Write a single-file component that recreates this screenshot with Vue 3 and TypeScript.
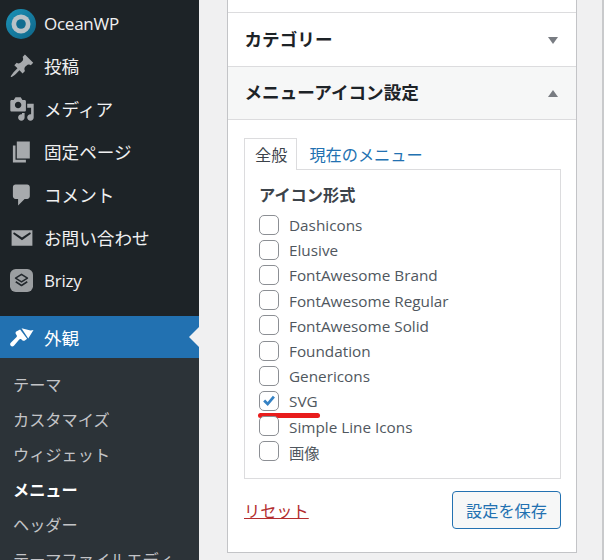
<script setup lang="ts">
interface MenuItem { label: string; d: string }
const menu: MenuItem[] = [
  { label: '投稿', d: 'M10.44 3.02l1.82-1.82 6.36 6.35-1.83 1.82c-1.05-.68-2.48-.57-3.41.36l-.75.75c-.92.93-1.04 2.35-.35 3.41l-1.83 1.82-2.41-2.41-2.8 2.79c-.42.42-3.38 2.71-3.8 2.29s1.86-3.39 2.28-3.81l2.79-2.79L4.1 9.36l1.83-1.82c1.05.69 2.48.57 3.4-.36l.75-.75c.93-.92 1.05-2.35.36-3.41z' },
  { label: 'メディア', d: 'M13 11V4c0-.55-.45-1-1-1h-1.67L9 1H5L3.67 3H2c-.55 0-1 .45-1 1v7c0 .55.45 1 1 1h10c.55 0 1-.45 1-1zM7 4.5c1.38 0 2.5 1.12 2.5 2.5S8.38 9.5 7 9.5 4.5 8.38 4.5 7 5.62 4.5 7 4.5zM14 6h5v10.5c0 1.38-1.12 2.5-2.5 2.5S14 17.88 14 16.5s1.12-2.5 2.5-2.5c.17 0 .34.02.5.05V9h-3V6zm-4 8.05V13h2v3.5c0 1.38-1.12 2.5-2.5 2.5S7 17.88 7 16.5 8.12 14 9.5 14c.17 0 .34.02.5.05z' },
  { label: '固定ページ', d: 'M6 15V2h10v13H6zm-1 1h8v2H3V5h2v11z' },
  { label: 'コメント', d: 'M5 2h9c1.1 0 2 .9 2 2v7c0 1.1-.9 2-2 2h-2l-5 5v-5H5c-1.1 0-2-.9-2-2V4c0-1.1.9-2 2-2z' },
  { label: 'お問い合わせ', d: 'M2 4h16v12H2zM3.4 6.1c-.3.4-.1.8.2 1l6.4 4.6 6.4-4.6c.3-.2.5-.6.2-1-.3-.4-.8-.4-1.1-.2L10 9.6 4.5 5.900c-.3-.2-.8-.2-1.100.2z' },
]
const subs = ['テーマ', 'カスタマイズ', 'ウィジェット', 'メニュー', 'ヘッダー', 'テーマファイルエディター']
const options = ['Dashicons', 'Elusive', 'FontAwesome Brand', 'FontAwesome Regular', 'FontAwesome Solid', 'Foundation', 'Genericons', 'SVG', 'Simple Line Icons', '画像']
</script>

<template>
  <div class="page">
    <aside class="side">
      <div class="row first">
        <span class="ico">
          <svg class="logo" width="30" height="30" viewBox="0 0 30 30">
            <defs>
              <linearGradient id="oc" x1="0" y1="0" x2="1" y2="1">
                <stop offset="0" stop-color="#1c93b8" />
                <stop offset="1" stop-color="#0f6588" />
              </linearGradient>
            </defs>
            <circle cx="15" cy="15" r="15" fill="url(#oc)" />
            <circle cx="15" cy="15" r="9.5" fill="#b9c2c7" />
            <circle cx="15" cy="15" r="4.8" fill="#116d90" />
          </svg>
        </span>
        <span class="latin">OceanWP</span>
      </div>
      <div v-for="m in menu" :key="m.label" class="row">
        <span class="ico">
          <svg width="26" height="26" viewBox="0 0 20 20"><path :d="m.d" fill="#a7aaad" fill-rule="evenodd" /></svg>
        </span>
        <span>{{ m.label }}</span>
      </div>
      <div class="row">
        <span class="ico">
          <svg width="23" height="23" viewBox="0 0 24 24">
            <rect width="24" height="24" rx="6" fill="#9b9ea1" />
            <path d="M12 5.5l6.2 4-6.2 4-6.2-4z" fill="none" stroke="#23282d" stroke-width="1.6" stroke-linejoin="round" />
            <path d="M6 13.3l6 3.9 6-3.900" fill="none" stroke="#23282d" stroke-width="1.6" stroke-linejoin="round" />
          </svg>
        </span>
        <span class="latin">Brizy</span>
      </div>
      <div class="row current">
        <span class="ico">
          <svg width="24" height="24" viewBox="0 0 25 25">
            <path d="M12 3.500l9.500 2.200 3-.5-5.500 8.800z" fill="#fff" />
            <path d="M10.500 4.800l7.300 9.600-2.300 1.700c-.9.600-2 .5-2.700-.2l-.8-.7c-.8-.7-1.900-.7-2.600.1l-5.300 6.200c-.9 1-2.400 1.100-3.300.2-.9-.9-.9-2.300 0-3.200l5.800-5.700c.7-.7.8-1.700.2-2.500l-.7-1c-.5-.8-.4-1.900.4-2.500z" fill="#fff" />
          </svg>
        </span>
        <span>外観</span>
        <i class="notch"></i>
      </div>
      <ul class="sub">
        <li v-for="s in subs" :key="s" :class="{ on: s === 'メニュー' }">{{ s }}</li>
      </ul>
    </aside>

    <main class="main">
      <section class="panel">
        <div class="blank"></div>
        <header class="head tall">
          <h3>カテゴリー</h3>
          <i class="tri down"></i>
        </header>
        <header class="head open">
          <h3>メニューアイコン設定</h3>
          <i class="tri up"></i>
        </header>
        <div class="body">
          <div class="tabs">
            <span class="tab active">全般</span>
            <span class="tab">現在のメニュー</span>
          </div>
          <div class="box">
            <h4>アイコン形式</h4>
            <label v-for="o in options" :key="o" class="opt">
              <span class="check">
                <svg v-if="o === 'SVG'" width="20" height="20" viewBox="0 0 20 20"><path d="M3.500 10.500l2.200-2.300 2.800 2.900 5.800-7 2.300 2-8 9.400z" fill="#3582c4" /></svg>
              </span>
              <span class="txt">{{ o }}</span>
              <i v-if="o === 'SVG'" class="mark"></i>
            </label>
          </div>
          <div class="actions">
            <a class="reset">リセット</a>
            <button class="save" type="button">設定を保存</button>
          </div>
        </div>
      </section>
    </main>
    <div class="edge"></div>
  </div>
</template>

<style>
html, body { margin: 0; background: #fff; }
</style>

<style scoped>
.page {
  display: flex;
  width: 612px;
  height: 560px;
  overflow: hidden;
  background: #fff;
  font-family: "Open Sans", "Noto Sans CJK JP", sans-serif;
}
.side {
  width: 199px;
  flex: none;
  height: 560px;
  padding-top: 1px;
  box-sizing: border-box;
  background: #1d2327;
  overflow: hidden;
}
.row {
  position: relative;
  display: flex;
  align-items: center;
  height: 43px;
  box-sizing: border-box;
  color: #f0f0f1;
  font-size: 17.6px;
}
.row.first { padding-top: 2px; }
.latin { font-size: 17px; letter-spacing: -0.25px; }
.ico {
  width: 44px;
  flex: none;
  display: flex;
  justify-content: center;
  padding-right: 1px;
  box-sizing: border-box;
}
.logo { margin-left: -1px; }
.row.current {
  margin-top: 14px;
  height: 42px;
  background: #2271b1;
  color: #fff;
}
.notch {
  position: absolute;
  right: 0;
  top: 11px;
  border: 10px solid transparent;
  border-right-color: #f0f0f1;
  border-left-width: 0;
}
.sub {
  list-style: none;
  margin: 0;
  padding: 10px 14px 0 14px;
  background: #2c3338;
  height: 202px;
}
.sub li {
  min-height: 35px;
  line-height: 35px;
  margin-left: -1px;
  font-size: 16.2px;
  color: #c3c4c7;
}
.sub li.on { color: #fff; font-weight: 700; }
.main {
  width: 403px;
  flex: none;
  padding-left: 28px;
  box-sizing: border-box;
  background: #f0f0f1;
}
.edge { width: 2px; flex: none; background: #c9cacc; }
.panel {
  width: 350px;
  height: 553px;
  box-sizing: border-box;
  background: #fff;
  border: 1px solid #c3c4c7;
  border-top: none;
}
.blank { height: 13px; box-sizing: border-box; border-bottom: 1px solid #dcdcde; }
.head {
  display: flex;
  align-items: center;
  justify-content: space-between;
  height: 53px;
  box-sizing: border-box;
  padding: 0 18px 2px 16.5px;
  border-bottom: 1px solid #dcdcde;
}
.head.tall { height: 54px; }
.head.open { background: #f6f7f7; }
.head.open h3 { margin-top: -2px; }
.head h3 {
  margin: 0;
  font-size: 17.6px;
  font-weight: 700;
  color: #1d2327;
}
.tri {
  width: 0;
  height: 0;
  margin-top: 3px;
  border-left: 5px solid transparent;
  border-right: 5px solid transparent;
}
.tri.down { border-top: 7px solid #787c82; }
.tri.up { border-bottom: 7px solid #787c82; }
.body { padding: 18px 16px 0; }
.tabs {
  display: flex;
  height: 32px;
  position: relative;
  z-index: 1;
}
.tab {
  height: 31px;
  line-height: 32px;
  padding: 0 7px 0 10px;
  font-size: 16.2px;
  color: #2271b1;
  border: 1px solid transparent;
  border-bottom: none;
}
.tab + .tab { padding-left: 11px; }
.tab.active {
  padding-right: 9px;
  color: #3c434a;
  background: #fff;
  border-color: #dcdcde;
}
.box {
  margin-top: -1px;
  width: 317px;
  height: 310px;
  box-sizing: border-box;
  border: 1px solid #dcdcde;
  padding: 12px 14px 0;
}
.box h4 {
  margin: 0 0 4px;
  font-size: 16.2px;
  line-height: 26px;
  font-weight: 700;
  color: #3c434a;
}
.opt {
  position: relative;
  display: flex;
  align-items: center;
  height: 25.2px;
  color: #50575e;
  font-size: 15.3px;
}
.check {
  width: 20px;
  height: 20px;
  flex: none;
  box-sizing: border-box;
  margin-right: 10px;
  background: #fff;
  border: 1px solid #8c8f94;
  border-radius: 5px;
  display: flex;
  align-items: center;
  justify-content: center;
}
.txt { position: relative; top: 0.5px; }
.mark {
  position: absolute;
  left: -1px;
  top: 25px;
  width: 62px;
  height: 5px;
  border-radius: 3px;
  background: #e81c1c;
}
.actions {
  display: flex;
  align-items: center;
  justify-content: space-between;
  margin-top: 12px;
}
.reset {
  font-size: 16.2px;
  color: #b32d2e;
  text-decoration: underline;
}
.save {
  width: 109px;
  height: 38px;
  box-sizing: border-box;
  margin-right: -1px;
  font: inherit;
  font-size: 16.2px;
  color: #2271b1;
  background: #f6f7f7;
  border: 1px solid #2271b1;
  border-radius: 4px;
  padding: 0;
}
</style>
